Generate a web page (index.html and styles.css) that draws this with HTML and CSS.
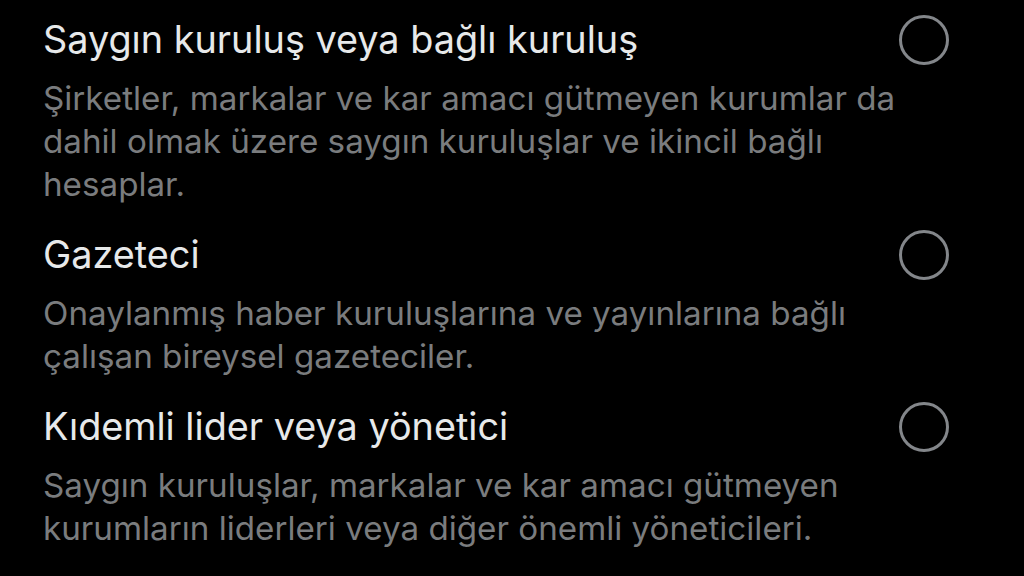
FILE: index.html
```html
<!DOCTYPE html>
<html lang="tr">
<head>
<meta charset="utf-8">
<link rel="stylesheet" href="styles.css">
</head>
<body>
<main class="list">
  <section class="option">
    <div class="text">
      <h2 class="title">Saygın kuruluş veya bağlı kuruluş</h2>
      <p class="desc">Şirketler, markalar ve kar amacı gütmeyen kurumlar da<br>dahil olmak üzere saygın kuruluşlar ve ikincil bağlı<br>hesaplar.</p>
    </div>
    <span class="radio"></span>
  </section>
  <section class="option">
    <div class="text">
      <h2 class="title">Gazeteci</h2>
      <p class="desc">Onaylanmış haber kuruluşlarına ve yayınlarına bağlı<br>çalışan bireysel gazeteciler.</p>
    </div>
    <span class="radio"></span>
  </section>
  <section class="option">
    <div class="text">
      <h2 class="title">Kıdemli lider veya yönetici</h2>
      <p class="desc">Saygın kuruluşlar, markalar ve kar amacı gütmeyen<br>kurumların liderleri veya diğer önemli yöneticileri.</p>
    </div>
    <span class="radio"></span>
  </section>
</main>
</body>
</html>
```
FILE: styles.css
```css
html, body {
  margin: 0;
  padding: 0;
  background: #000;
}
body {
  width: 1024px;
  height: 576px;
  overflow: hidden;
  font-family: "Inter", "Roboto", "Liberation Sans", sans-serif;
}
.list {
  display: flex;
  flex-direction: column;
  gap: 24px;
  padding: 15px 75px 0 43px;
}
.option {
  display: flex;
  align-items: flex-start;
  justify-content: space-between;
}
.text {
  display: flex;
  flex-direction: column;
  gap: 14px;
}
.title {
  margin: 0;
  font-size: 37.8px;
  font-weight: 400;
  line-height: 48px;
  color: #e7e9ea;
  white-space: nowrap;
}
.desc {
  margin: 0;
  font-size: 33.2px;
  line-height: 43px;
  color: #7a7c7e;
  white-space: nowrap;
}
.radio {
  flex: none;
  box-sizing: border-box;
  width: 50px;
  height: 50px;
  margin-top: 0;
  border: 3px solid #83868a;
  border-radius: 50%;
}
```
